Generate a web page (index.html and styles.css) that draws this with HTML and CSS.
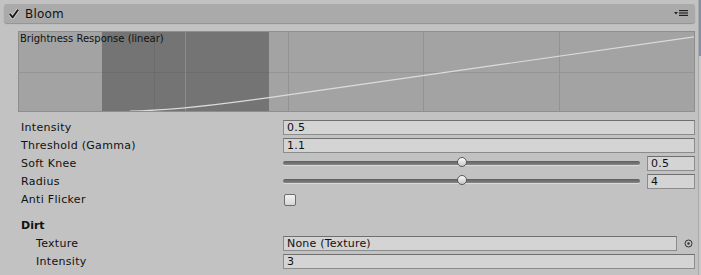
FILE: index.html
```html
<!DOCTYPE html>
<html>
	<head>
		<meta charset="utf-8">
		<title>Bloom</title>
		<link rel="stylesheet" href="styles.css">
	</head>
	<body>
		<div class="inspector">
			<div class="inspector_header">
				<svg class="inspector_header__check" width="10" height="10" viewBox="0 0 10 10">
					<path d="M1.2 5.4 L3.6 8.4 L8.8 1.2" fill="none" stroke="#f4f4f4" stroke-width="3.2" stroke-linecap="round" stroke-linejoin="round"/>
					<path d="M1.2 5.4 L3.6 8.4 L8.8 1.2" fill="none" stroke="#1c1c1c" stroke-width="2" stroke-linecap="round" stroke-linejoin="round"/>
				</svg>
				<span class="inspector_header__title">Bloom</span>
				<svg class="inspector_header__menu" width="16" height="8" viewBox="0 0 16 8">
					<path d="M1 2 L5 2 L3 4.5 Z" fill="#222"/>
					<rect x="6" y="0" width="9" height="1.2" fill="#222"/>
					<rect x="6" y="2.4" width="9" height="1.2" fill="#222"/>
					<rect x="6" y="4.8" width="9" height="1.2" fill="#222"/>
				</svg>
			</div>

			<div class="graph">
				<svg class="graph__plot" width="675" height="79" viewBox="0 0 675 79">
					<rect x="0" y="0" width="675" height="79" fill="#a3a3a3"/>
					<rect x="83" y="0" width="167" height="79" fill="#747474"/>
					<rect x="0" y="40" width="675" height="1" fill="#959595"/>
					<rect x="83" y="40" width="167" height="1" fill="#6c6c6c"/>
					<rect x="135" y="0" width="1" height="79" fill="#6c6c6c"/>
					<rect x="166" y="0" width="1" height="79" fill="#8c8c8c"/>
					<rect x="269" y="0" width="1" height="79" fill="#939393"/>
					<rect x="404" y="0" width="1" height="79" fill="#939393"/>
					<rect x="540" y="0" width="1" height="79" fill="#939393"/>
					<path d="M111 79 Q156 79 250 65.6 L676 4.8" fill="none" stroke="#dcdcdc" stroke-width="1.2"/>
				</svg>
				<span class="graph__label">Brightness Response (linear)</span>
			</div>

			<div class="props">
				<div class="prop">
					<span class="prop__label">Intensity</span>
					<div class="prop__value"><span class="field">0.5</span></div>
				</div>
				<div class="prop">
					<span class="prop__label">Threshold (Gamma)</span>
					<div class="prop__value"><span class="field">1.1</span></div>
				</div>
				<div class="prop">
					<span class="prop__label">Soft Knee</span>
					<div class="prop__value">
						<div class="slider"><span class="slider__thumb" style="left:50%"></span></div>
						<span class="field field-num">0.5</span>
					</div>
				</div>
				<div class="prop">
					<span class="prop__label">Radius</span>
					<div class="prop__value">
						<div class="slider"><span class="slider__thumb" style="left:50%"></span></div>
						<span class="field field-num">4</span>
					</div>
				</div>
				<div class="prop">
					<span class="prop__label">Anti Flicker</span>
					<div class="prop__value"><span class="toggle"></span></div>
				</div>

				<div class="prop prop-group">
					<span class="prop__label prop__label-bold">Dirt</span>
				</div>
				<div class="prop prop-sub">
					<span class="prop__label">Texture</span>
					<div class="prop__value">
						<span class="field">None (Texture)</span>
						<svg class="picker" width="9" height="9" viewBox="0 0 9 9">
							<circle cx="4.5" cy="4.5" r="3.5" fill="none" stroke="#333" stroke-width="1"/>
							<circle cx="4.5" cy="4.5" r="1.2" fill="#333"/>
						</svg>
					</div>
				</div>
				<div class="prop prop-sub">
					<span class="prop__label">Intensity</span>
					<div class="prop__value"><span class="field">3</span></div>
				</div>
			</div>
		</div>
		<div class="scrollbar"><span class="scrollbar__thumb"></span></div>
	</body>
</html>
```
FILE: styles.css
```css
html, body{ margin:0; padding:0; }
body{ display:flex; width:701px; height:275px; overflow:hidden; background-color:#c2c2c2; font-family:"DejaVu Sans", Verdana, sans-serif; font-size:11px; color:#111; }

.inspector{ flex:1; padding:4px 3px 0 4px; }
.inspector_header{ display:flex; align-items:center; height:19px; padding:0 6px 0 5px; border-radius:3px; background-color:#aaaaaa; box-shadow:0 1px 1px rgba(0,0,0,0.25); }
.inspector_header__check{ flex:none; }
.inspector_header__title{ flex:1; margin-left:6px; font-size:12px; letter-spacing:0.2px; color:#111; }
.inspector_header__menu{ flex:none; margin-top:1px; }

.graph{ position:relative; width:675px; height:79px; margin:8px 0 0 14px; border:1px solid #8e8e8e; }
.graph__plot{ display:block; }
.graph__label{ position:absolute; left:1px; top:1px; font-size:10px; color:#111; }

.props{ display:flex; flex-direction:column; margin-top:6px; }
.prop{ display:grid; grid-template-columns:262px 1fr; align-items:center; height:18px; padding-left:17px; }
.prop__label{ white-space:nowrap; letter-spacing:0.3px; }
.prop__label-bold{ font-weight:bold; letter-spacing:0; }
.prop-group{ margin-top:8px; }
.prop-sub .prop__label{ padding-left:15px; }
.prop__value{ display:flex; align-items:center; gap:7px; height:18px; }

.field{ flex:1; box-sizing:border-box; height:15px; line-height:13px; padding:0 3px; border:1px solid #8c8c8c; border-top-color:#6f6f6f; background-color:#d4d4d4; white-space:nowrap; overflow:hidden; letter-spacing:0.2px; }
.field-num{ flex:none; width:48px; }

.slider{ position:relative; flex:1; height:4px; border-radius:2px; background:linear-gradient(#5e5e5e, #858585); box-shadow:0 1px 0 #dadada; }
.slider__thumb{ position:absolute; top:-4px; width:10px; height:10px; margin-left:-5px; box-sizing:border-box; border:1px solid #5a5a5a; border-radius:50%; background:linear-gradient(#fafafa, #c8c8c8); }

.toggle{ display:block; width:12px; height:12px; margin:1px 0 0 1px; box-sizing:border-box; border:1px solid #6d6d6d; border-radius:2px; background:linear-gradient(#f2f2f2, #d6d6d6); }

.picker{ flex:none; margin-right:2px; }

.scrollbar{ width:4px; border-left:1px solid #a9a9a9; background-color:#c8c8c8; }
.scrollbar__thumb{ display:block; height:56px; background-color:#8290aa; }
```
